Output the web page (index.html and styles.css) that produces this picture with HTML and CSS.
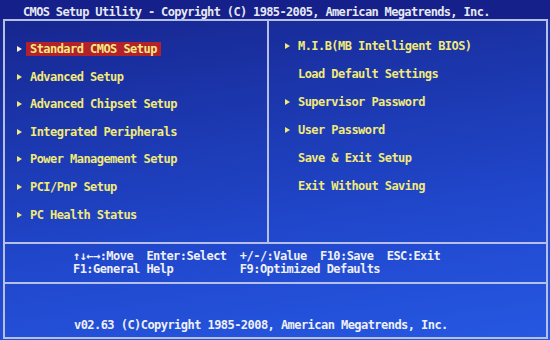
FILE: index.html
```html
<!DOCTYPE html>
<html lang="en">
<head>
  <meta charset="UTF-8" />
  <meta name="viewport" content="width=device-width, initial-scale=1.0" />
  <title>CMOS Setup Utility</title>
  <link rel="stylesheet" href="styles.css">
</head>
<body>

  <div class="title-bar">CMOS Setup Utility - Copyright (C) 1985-2005, American Megatrends, Inc.</div>

  <div class="frame">
    <div class="menus">
      <ul class="menu menu-left">
        <li class="item selected"><span class="arrow"></span><span class="label">Standard CMOS Setup</span></li>
        <li class="item"><span class="arrow"></span><span class="label">Advanced Setup</span></li>
        <li class="item"><span class="arrow"></span><span class="label">Advanced Chipset Setup</span></li>
        <li class="item"><span class="arrow"></span><span class="label">Integrated Peripherals</span></li>
        <li class="item"><span class="arrow"></span><span class="label">Power Management Setup</span></li>
        <li class="item"><span class="arrow"></span><span class="label">PCI/PnP Setup</span></li>
        <li class="item"><span class="arrow"></span><span class="label">PC Health Status</span></li>
      </ul>
      <ul class="menu menu-right">
        <li class="item"><span class="arrow"></span><span class="label">M.I.B(MB Intelligent BIOS)</span></li>
        <li class="item"><span class="arrow none"></span><span class="label">Load Default Settings</span></li>
        <li class="item"><span class="arrow"></span><span class="label">Supervisor Password</span></li>
        <li class="item"><span class="arrow"></span><span class="label">User Password</span></li>
        <li class="item"><span class="arrow none"></span><span class="label">Save &amp; Exit Setup</span></li>
        <li class="item"><span class="arrow none"></span><span class="label">Exit Without Saving</span></li>
      </ul>
    </div>

    <div class="help">
      <div class="help-line">↑↓←→:Move  Enter:Select  +/-/:Value  F10:Save  ESC:Exit</div>
      <div class="help-line">F1:General Help          F9:Optimized Defaults</div>
    </div>

    <div class="footer">v02.63 (C)Copyright 1985-2008, American Megatrends, Inc.</div>
  </div>

</body>
</html>
```

FILE: styles.css
```css
body {
  margin: 0;
  width: 550px;
  height: 340px;
  overflow: hidden;
  font-family: "DejaVu Sans Mono", "Liberation Mono", monospace;
  font-size: 12px;
  letter-spacing: -0.55px;
  font-weight: bold;
  color: #eef0f6;
  background: linear-gradient(172deg, #16238a 0%, #1b35aa 30%, #2047cc 65%, #2658e2 100%);
}

.title-bar {
  height: 19px;
  box-sizing: border-box;
  padding: 4px 0 0 23px;
  line-height: 16px;
  letter-spacing: -0.65px;
  white-space: pre;
  color: #e6e8f2;
  background: #15208a;
}

.frame {
  height: 320px;
  margin: 0 2px 0 3px;
  box-sizing: border-box;
  border: 2px solid #b6c0e4;
  display: flex;
  flex-direction: column;
}

.menus {
  height: 223px;
  box-sizing: border-box;
  border-bottom: 2px solid #b6c0e4;
  display: flex;
}

.menu {
  list-style: none;
  margin: 0;
  display: flex;
  flex-direction: column;
}

.menu-left {
  width: 264px;
  box-sizing: border-box;
  border-right: 2px solid #b6c0e4;
  padding: 21px 0 0 12px;
  gap: 13.6px;
}

.menu-right {
  flex: 1;
  padding: 18px 0 0 16px;
  gap: 14px;
}

.item {
  display: flex;
  align-items: center;
  height: 14px;
  line-height: 14px;
  color: #f2ea78;
  white-space: pre;
}

.arrow {
  width: 9px;
  height: 14px;
  position: relative;
}

.arrow::before {
  content: "";
  position: absolute;
  left: 0;
  top: 4px;
  border-left: 5px solid #f2ea78;
  border-top: 3px solid transparent;
  border-bottom: 3px solid transparent;
}

.arrow.none::before {
  display: none;
}

.label {
  padding: 0 4px;
}

.selected .label {
  background: #b3222c;
  color: #f4ec80;
}

.selected .arrow::before {
  border-left-color: #f6f2d8;
}

.help {
  height: 40px;
  box-sizing: border-box;
  border-bottom: 2px solid #b6c0e4;
  padding: 6px 0 0 68px;
}

.help-line {
  line-height: 13px;
  white-space: pre;
}

.footer {
  flex: 1;
  padding: 35px 0 0 69px;
  line-height: 13px;
  white-space: pre;
}
```
